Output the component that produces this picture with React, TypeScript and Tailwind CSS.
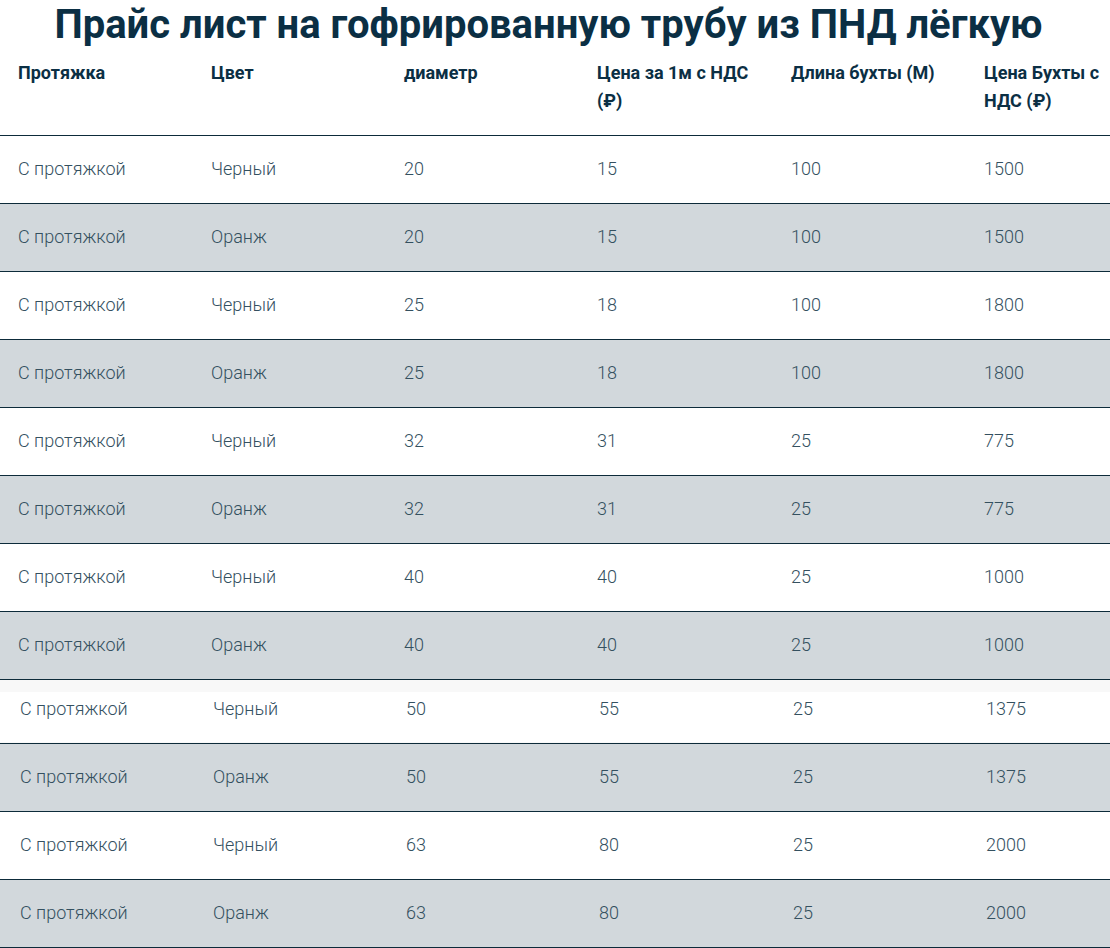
import React from 'react';

const headers = [
  'Протяжка',
  'Цвет',
  'диаметр',
  'Цена за 1м с НДС (₽)',
  'Длина бухты (М)',
  'Цена Бухты с НДС (₽)',
];

const rows = [
  ['С протяжкой', 'Черный', '20', '15', '100', '1500'],
  ['С протяжкой', 'Оранж', '20', '15', '100', '1500'],
  ['С протяжкой', 'Черный', '25', '18', '100', '1800'],
  ['С протяжкой', 'Оранж', '25', '18', '100', '1800'],
  ['С протяжкой', 'Черный', '32', '31', '25', '775'],
  ['С протяжкой', 'Оранж', '32', '31', '25', '775'],
  ['С протяжкой', 'Черный', '40', '40', '25', '1000'],
  ['С протяжкой', 'Оранж', '40', '40', '25', '1000'],
];

const rows2 = [
  ['С протяжкой', 'Черный', '50', '55', '25', '1375'],
  ['С протяжкой', 'Оранж', '50', '55', '25', '1375'],
  ['С протяжкой', 'Черный', '63', '80', '25', '2000'],
  ['С протяжкой', 'Оранж', '63', '80', '25', '2000'],
];

const Cols = () => (
  <colgroup>
    <col className="w-[193px]" />
    <col className="w-[193px]" />
    <col className="w-[193px]" />
    <col className="w-[194px]" />
    <col className="w-[193px]" />
    <col />
  </colgroup>
);

export default function App() {
  return (
    <div className="w-[1110px] bg-white font-['Roboto',sans-serif] overflow-hidden">
      <h1 className="text-center text-[40px] leading-[50px] font-bold text-[#0b2f44] pr-[13px]">
        Прайс лист на гофрированную трубу из ПНД лёгкую
      </h1>

      <table className="w-[1110px] table-fixed border-collapse">
        <Cols />
        <thead>
          <tr className="border-b border-[#0d2b3a]">
            {headers.map((h) => (
              <th
                key={h}
                className="text-left align-top font-bold text-[18px] leading-[28px] text-[#0b2f44] pl-[18px] pr-[4px] pt-[9px] pb-[20px]"
              >
                {h}
              </th>
            ))}
          </tr>
        </thead>
        <tbody>
          {rows.map((r, i) => (
            <tr
              key={i}
              className={`border-b border-[#0d2b3a] h-[68px] ${i % 2 === 1 ? 'bg-[#d2d8dc]' : 'bg-white'}`}
            >
              {r.map((c, j) => (
                <td
                  key={j}
                  className="pl-[18px] pr-[4px] pb-[2px] text-[18px] font-light text-[#34505f] align-middle"
                >
                  {c}
                </td>
              ))}
            </tr>
          ))}
        </tbody>
      </table>

      <table className="w-[1110px] table-fixed border-collapse">
        <Cols />
        <tbody>
          {rows2.map((r, i) => (
            <tr
              key={i}
              className={`border-b border-[#0d2b3a] ${i === 0 ? 'h-[63px] bg-[linear-gradient(#f8f8f8_0,#f8f8f8_12px,#ffffff_12px)]' : 'h-[68px]'} ${i % 2 === 1 ? 'bg-[#d2d8dc]' : 'bg-white'}`}
            >
              {r.map((c, j) => (
                <td
                  key={j}
                  className={`pl-[20px] pr-[4px] text-[18px] font-light text-[#34505f] ${i === 0 ? 'align-top pt-[15px]' : 'align-middle pb-[2px]'}`}
                >
                  {c}
                </td>
              ))}
            </tr>
          ))}
        </tbody>
      </table>
    </div>
  );
}
